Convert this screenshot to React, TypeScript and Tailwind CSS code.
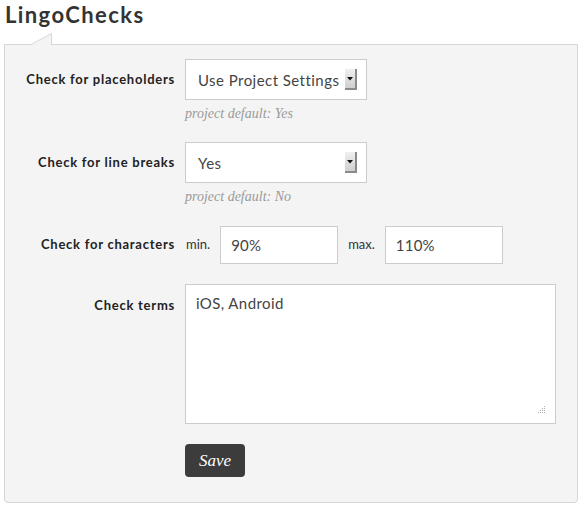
import React from "react";

function SelectBox({ value }: { value: string }) {
  return (
    <div className="flex h-[41px] w-[182px] items-center justify-between border border-[#cccccc] bg-white pl-[12px] pr-[9px]">
      <span className="text-[15px] leading-[20px] tracking-[0.45px] text-[#444444]">{value}</span>
      <span className="flex h-[21px] w-[12px] items-center justify-center border-r-2 border-b-2 border-[#8a8a8a] bg-gradient-to-b from-[#f0f0f0] to-[#cfcfcf]">
        <svg width="6" height="4" viewBox="0 0 6 4">
          <path d="M0 0 L6 0 L3 3.5 Z" fill="#111" />
        </svg>
      </span>
    </div>
  );
}

function Label({ children, top }: { children: React.ReactNode; top?: boolean }) {
  return (
    <div
      className={
        "flex justify-end pr-[10px] text-[13px] font-bold tracking-[0.75px] text-[#222222] " +
        (top ? "items-start pt-[12px]" : "items-center")
      }
    >
      {children}
    </div>
  );
}

function Hint({ children }: { children: React.ReactNode }) {
  return (
    <div className="mt-[4px] text-[14px] italic leading-[20px] text-[#9a9a9a] [font-family:'Liberation_Serif',serif]">
      {children}
    </div>
  );
}

export default function App() {
  return (
    <div className="h-[512px] w-[584px] bg-white [font-family:Lato,'Noto_Sans',sans-serif]">
      <div className="h-[44px] pl-[5px] pt-[1px]">
        <h1 className="text-[22px] font-bold leading-[28px] tracking-[1.4px] text-[#333333]">LingoChecks</h1>
      </div>
      <div className="relative ml-[4px] h-[459px] w-[574px] rounded-b-[4px] border border-[#d6d6d6] bg-[#f4f4f4] pt-[14px]">
        <svg
          className="absolute left-[26px] top-[-12px]"
          width="22"
          height="13"
          viewBox="0 0 22 13"
        >
          <path d="M0 12 L21 0.5 L21 12 Z" fill="#f4f4f4" />
          <path d="M0 11.5 L20.5 0.5 L20.5 12" fill="none" stroke="#d6d6d6" strokeWidth="1" />
        </svg>
        <div className="grid grid-cols-[180px_1fr]">
          <Label>Check for placeholders</Label>
          <div>
            <SelectBox value="Use Project Settings" />
          </div>
          <div />
          <div className="mb-[18px]">
            <Hint>project default: Yes</Hint>
          </div>

          <Label>Check for line breaks</Label>
          <div>
            <SelectBox value="Yes" />
          </div>
          <div />
          <div className="mb-[19px]">
            <Hint>project default: No</Hint>
          </div>

          <Label>Check for characters</Label>
          <div className="flex items-center text-[13px] text-[#333333]">
            <span className="ml-[1px]">min.</span>
            <div className="ml-[10px] flex h-[38px] w-[118px] items-center border border-[#cccccc] bg-white pl-[10px] text-[15px] tracking-[0.2px] text-[#444444]">
              90%
            </div>
            <span className="ml-[10px]">max.</span>
            <div className="ml-[10px] flex h-[38px] w-[118px] items-center border border-[#cccccc] bg-white pl-[10px] text-[15px] tracking-[0.2px] text-[#444444]">
              110%
            </div>
          </div>

          <div className="h-[20px]" />
          <div className="h-[20px]" />

          <Label top>Check terms</Label>
          <div>
            <div className="relative h-[140px] w-[371px] border border-[#cccccc] bg-white pl-[10px] pt-[8px] text-[15px] leading-[20px] tracking-[0.4px] text-[#444444]">
              iOS, Android
              <svg className="absolute bottom-[9px] right-[9px]" width="8" height="8" viewBox="0 0 8 8">
                <g fill="#b0b0b0">
                  <rect x="6" y="0" width="1" height="1" />
                  <rect x="6" y="2" width="1" height="1" />
                  <rect x="4" y="2" width="1" height="1" />
                  <rect x="6" y="4" width="1" height="1" />
                  <rect x="4" y="4" width="1" height="1" />
                  <rect x="2" y="4" width="1" height="1" />
                  <rect x="6" y="6" width="1" height="1" />
                  <rect x="4" y="6" width="1" height="1" />
                  <rect x="2" y="6" width="1" height="1" />
                  <rect x="0" y="6" width="1" height="1" />
                </g>
              </svg>
            </div>
          </div>

          <div className="h-[20px]" />
          <div className="h-[20px]" />

          <div />
          <div>
            <button className="h-[33px] w-[60px] rounded-[4px] bg-[#3c3c3c] text-[17px] italic text-white [font-family:'Liberation_Serif',serif]">
              Save
            </button>
          </div>
        </div>
      </div>
    </div>
  );
}
